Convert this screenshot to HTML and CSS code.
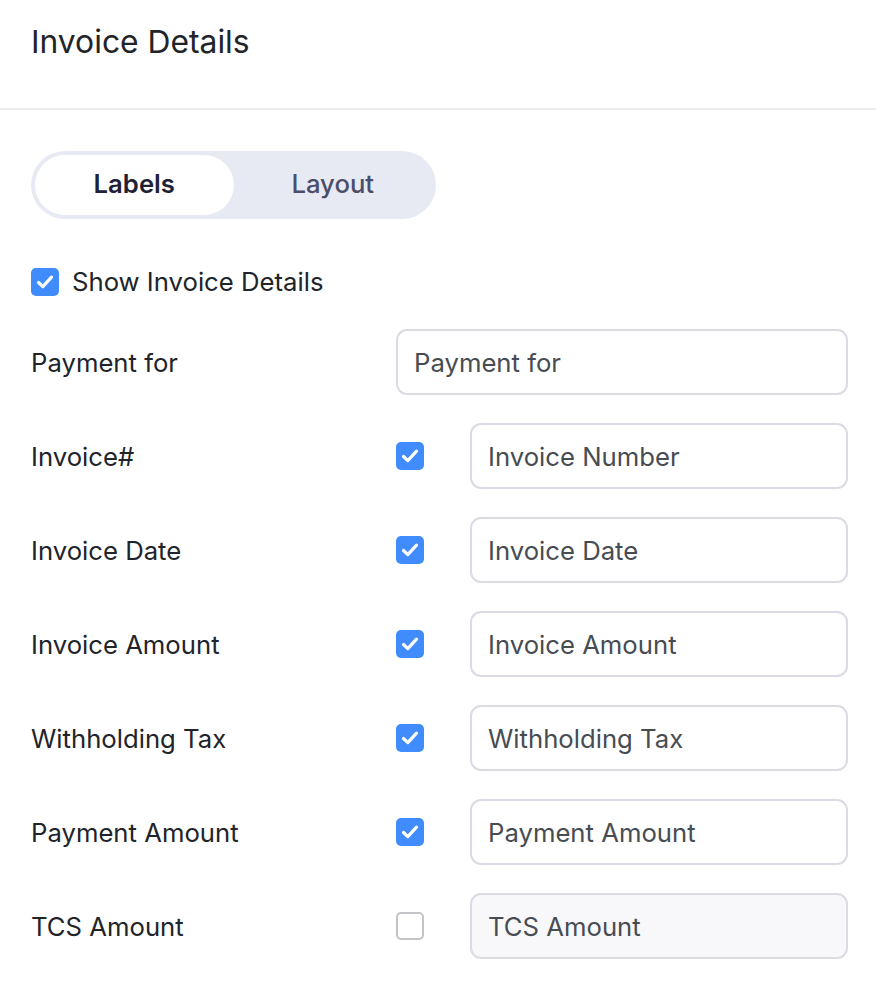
FILE: index.html
```html
<!DOCTYPE html>
<html lang="en">
<head>
<meta charset="utf-8">
<title>Invoice Details</title>
<link rel="stylesheet" href="styles.css">
</head>
<body>
<div class="panel">
  <header class="panel-header">
    <h1 class="panel-title">Invoice Details</h1>
  </header>
  <main class="panel-body">
    <div class="segmented">
      <button class="seg-btn seg-active">Labels</button>
      <button class="seg-btn">Layout</button>
    </div>

    <label class="show-row">
      <span class="cb cb-on"><svg viewBox="0 0 28 28"><path d="M7.5 14.5 L11.8 18.6 L20.5 9.2"/></svg></span>
      <span class="show-text">Show Invoice Details</span>
    </label>

    <div class="rows">
      <div class="row">
        <span class="row-label">Payment for</span>
        <div class="field">Payment for</div>
      </div>
      <div class="row">
        <span class="row-label">Invoice#</span>
        <span class="cb cb-on"><svg viewBox="0 0 28 28"><path d="M7.5 14.5 L11.8 18.6 L20.5 9.2"/></svg></span>
        <div class="field field-indent">Invoice Number</div>
      </div>
      <div class="row">
        <span class="row-label">Invoice Date</span>
        <span class="cb cb-on"><svg viewBox="0 0 28 28"><path d="M7.5 14.5 L11.8 18.6 L20.5 9.2"/></svg></span>
        <div class="field field-indent">Invoice Date</div>
      </div>
      <div class="row">
        <span class="row-label">Invoice Amount</span>
        <span class="cb cb-on"><svg viewBox="0 0 28 28"><path d="M7.5 14.5 L11.8 18.6 L20.5 9.2"/></svg></span>
        <div class="field field-indent">Invoice Amount</div>
      </div>
      <div class="row">
        <span class="row-label">Withholding Tax</span>
        <span class="cb cb-on"><svg viewBox="0 0 28 28"><path d="M7.5 14.5 L11.8 18.6 L20.5 9.2"/></svg></span>
        <div class="field field-indent">Withholding Tax</div>
      </div>
      <div class="row">
        <span class="row-label">Payment Amount</span>
        <span class="cb cb-on"><svg viewBox="0 0 28 28"><path d="M7.5 14.5 L11.8 18.6 L20.5 9.2"/></svg></span>
        <div class="field field-indent">Payment Amount</div>
      </div>
      <div class="row">
        <span class="row-label">TCS Amount</span>
        <span class="cb cb-off"></span>
        <div class="field field-indent field-disabled">TCS Amount</div>
      </div>
    </div>
  </main>
</div>
</body>
</html>
```

FILE: styles.css
```css
* { box-sizing: border-box; }

html, body {
  margin: 0;
  padding: 0;
  background: #ffffff;
  font-family: Inter, "Noto Sans", "Liberation Sans", sans-serif;
  color: #212429;
}

.panel {
  width: 876px;
}

.panel-header {
  height: 110px;
  padding: 23px 31px 0;
  border-bottom: 2px solid #ebebf0;
}

.panel-title {
  margin: 0;
  font-size: 31.8px;
  line-height: 38px;
  font-weight: 400;
  color: #212429;
}

.panel-body {
  padding: 41px 28px 0 31px;
}

.segmented {
  display: flex;
  width: 405px;
  height: 68px;
  padding: 4px;
  border-radius: 34px;
  background: #e8eaf3;
}

.seg-btn {
  flex: 1;
  border: 0;
  margin: 0;
  padding: 0 0 3px;
  background: transparent;
  border-radius: 30px;
  font-family: inherit;
  font-size: 25.7px;
  font-weight: 500;
  color: #4a4e6a;
}

.seg-active {
  background: #ffffff;
  font-weight: 600;
  color: #1f2236;
}

.show-row {
  display: flex;
  align-items: center;
  gap: 13px;
  margin-top: 49px;
}

.show-text {
  font-size: 25.7px;
  line-height: 28px;
  color: #212429;
}

.cb {
  flex: none;
  width: 28px;
  height: 28px;
  border-radius: 5px;
  display: inline-flex;
  align-items: center;
  justify-content: center;
}

.cb svg {
  width: 28px;
  height: 28px;
}

.cb svg path {
  fill: none;
  stroke: #ffffff;
  stroke-width: 3.2;
  stroke-linecap: round;
  stroke-linejoin: round;
}

.cb-on {
  background: #408cfc;
}

.cb-off {
  background: #ffffff;
  border: 2px solid #c4c4c8;
}

.rows {
  display: flex;
  flex-direction: column;
  gap: 28px;
  margin-top: 33px;
}

.row {
  display: flex;
  align-items: center;
}

.row-label {
  width: 365px;
  flex: none;
  font-size: 25.7px;
  color: #212429;
}

.field {
  flex: 1;
  height: 66px;
  border: 2px solid #dbdae5;
  border-radius: 11px;
  padding: 0 16px;
  display: flex;
  align-items: center;
  font-size: 25.7px;
  color: #474c53;
  background: #ffffff;
}

.field-indent {
  margin-left: 46px;
}

.field-disabled {
  background: #f8f8fb;
}
```
